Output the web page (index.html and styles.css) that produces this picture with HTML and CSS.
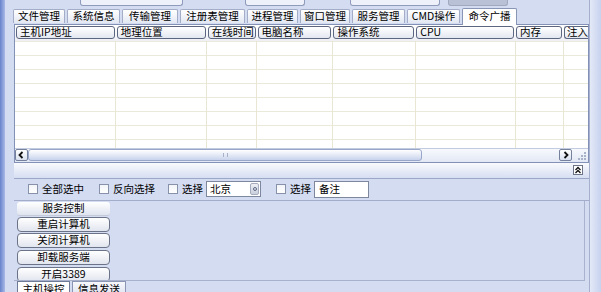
FILE: index.html
```html
<!DOCTYPE html>
<html lang="zh">
<head>
<meta charset="utf-8">
<link rel="stylesheet" href="styles.css">
</head>
<body>
<div class="app">
  <div class="lbar"></div>
  <div class="main">
    <div class="top">
      <span class="tb tb1"></span>
      <span class="tb tb2"></span>
      <span class="tb tb3"></span>
      <span class="tb tb4"></span>
    </div>
    <div class="tabs">
      <span class="tab">文件管理</span>
      <span class="tab">系统信息</span>
      <span class="tab">传输管理</span>
      <span class="tab">注册表管理</span>
      <span class="tab">进程管理</span>
      <span class="tab">窗口管理</span>
      <span class="tab">服务管理</span>
      <span class="tab">CMD操作</span>
      <span class="tab on">命令广播</span>
    </div>
    <div class="grid">
      <div class="head">
        <span class="hc c1">主机IP地址</span>
        <span class="hc c2">地理位置</span>
        <span class="hc c3">在线时间</span>
        <span class="hc c4">电脑名称</span>
        <span class="hc c5">操作系统</span>
        <span class="hc c6">CPU</span>
        <span class="hc c7">内存</span>
        <span class="hc c8">注入</span>
      </div>
      <div class="body">
        <span class="col c1"></span>
        <span class="col c2"></span>
        <span class="col c3"></span>
        <span class="col c4"></span>
        <span class="col c5"></span>
        <span class="col c6"></span>
        <span class="col c7"></span>
        <span class="col c8"></span>
      </div>
      <div class="hs">
        <span class="sbtn"><svg width="11" height="10" viewBox="0 0 11 10"><path d="M6.5 2 L3.5 5 L6.5 8" fill="none" stroke="#111" stroke-width="1.8"/></svg></span>
        <span class="thumb"><span class="gr"></span></span>
        <span class="track"></span>
        <span class="sbtn"><svg width="11" height="10" viewBox="0 0 11 10"><path d="M4.5 2 L7.5 5 L4.5 8" fill="none" stroke="#111" stroke-width="1.8"/></svg></span>
        <span class="grip"><svg width="16" height="13" viewBox="0 0 16 13"><g fill="#a8b2c8"><rect x="12" y="3" width="2" height="2"/><rect x="9" y="6" width="2" height="2"/><rect x="12" y="6" width="2" height="2"/><rect x="6" y="9" width="2" height="2"/><rect x="9" y="9" width="2" height="2"/><rect x="12" y="9" width="2" height="2"/></g></svg></span>
      </div>
    </div>
    <div class="split">
      <span class="colbtn"><svg width="8" height="8" viewBox="0 0 8 8"><path d="M1.5 4 L4 1.5 L6.5 4 M1.5 7 L4 4.5 L6.5 7" fill="none" stroke="#111" stroke-width="1.3"/></svg></span>
    </div>
    <div class="filter">
      <label class="chk f1"><span class="box"></span>全部选中</label>
      <label class="chk f2"><span class="box"></span>反向选择</label>
      <label class="chk f3"><span class="box"></span>选择</label>
      <span class="sel">北京<span class="spin"><span class="dot"></span></span></span>
      <label class="chk f4"><span class="box"></span>选择</label>
      <span class="inp">备注</span>
    </div>
    <div class="panel">
      <div class="grp">服务控制</div>
      <div class="btn b1">重启计算机</div>
      <div class="btn b2">关闭计算机</div>
      <div class="btn b3">卸载服务端</div>
      <div class="btn b4">开启3389</div>
    </div>
    <div class="btabs">
      <span class="bt on">主机操控</span>
      <span class="bt">信息发送</span>
    </div>
  </div>
  <div class="rbar"></div>
</div>
</body>
</html>
```

FILE: styles.css
```css
* { box-sizing: border-box; margin: 0; padding: 0; }
html, body { width: 601px; height: 292px; overflow: hidden; }
body {
  font-family: "Noto Sans CJK SC", "Liberation Sans", sans-serif;
  font-size: 10.5px;
  line-height: 1;
  color: #000;
  background: #d3dbf1;
}
.app { display: flex; height: 292px; }
.lbar { width: 5px; background: linear-gradient(to right, #6783cb, #a9b9e7); }
.rbar { width: 12px; border-left: 1px solid #a5b0cf; background: linear-gradient(to right, #e4e9f7, #c7d2ee); }
.main { flex: 1; display: flex; flex-direction: column; padding-left: 9px; background: #d4dcf2; overflow: hidden; }

/* top strip */
.top { height: 8px; display: flex; align-items: flex-start; }
.tb { height: 6px; border: 1px solid #8f9bbb; border-top: none; border-radius: 0 0 3px 3px; background: #eef1f9; }
.tb1 { margin-left: 66px; width: 103px; }
.tb2 { margin-left: 62px; width: 60px; }
.tb3 { margin-left: 45px; width: 90px; }
.tb4 { margin-left: 8px; width: 60px; background: #b9c1d6; border-color: #a0a9c0; }

/* tabs */
.tabs { height: 16px; display: flex; align-items: flex-end; gap: 2px; margin-left: -1px; }
.tab {
  height: 14px; margin-bottom: 1px;
  display: flex; align-items: center; justify-content: center;
  border: 1px solid #a3adc8; border-bottom: none; border-radius: 2px 2px 0 0;
  background: linear-gradient(#ffffff, #e2e7f2);
  white-space: nowrap;
}
.tab:nth-child(1) { width: 52px; }
.tab:nth-child(2) { width: 53px; }
.tab:nth-child(3) { width: 56px; }
.tab:nth-child(4) { width: 65px; }
.tab:nth-child(5) { width: 51px; }
.tab:nth-child(6) { width: 50px; }
.tab:nth-child(7) { width: 53px; }
.tab:nth-child(8) { width: 53px; }
.tab:nth-child(9) { width: 55px; }
.tab.on { height: 17px; margin-bottom: -1px; background: #fff; border-color: #8895b5; padding-bottom: 2px; position: relative; z-index: 1; }

/* grid */
.grid { width: 575px; height: 139px; border: 1px solid #8391b6; background: #fff; display: flex; flex-direction: column; }
.head { height: 16px; display: flex; background: linear-gradient(#ffffff, #eef0f6); }
.hc {
  margin: 1px 1px 2px 1px;
  border: 1px solid #5d6680; border-radius: 3px;
  background: linear-gradient(#ffffff, #e3e7f0);
  padding-left: 3px; display: flex; align-items: center;
  white-space: nowrap;
}
.c1 { width: 101px; } .c2 { width: 91px; } .c3 { width: 50px; } .c4 { width: 76px; }
.c5 { width: 83px; } .c6 { width: 100px; } .c7 { width: 48px; } .c8 { width: 24px; }
.hc.c1 { width: 99px; } .hc.c2 { width: 89px; } .hc.c3 { width: 48px; } .hc.c4 { width: 74px; }
.hc.c5 { width: 81px; } .hc.c6 { width: 98px; } .hc.c7 { width: 46px; } .hc.c8 { width: 24px; margin-right: 0; border-right: none; border-radius: 3px 0 0 3px; padding-left: 2px; }
.body {
  height: 107px; display: flex;
  background: repeating-linear-gradient(to bottom, #ebeada 0, #ebeada 1px, #ffffff 1px, #ffffff 14px);
}
.col { height: 100%; border-right: 1px solid #e9e7d4; }
.col.c8 { border-right: none; }

/* scrollbar */
.hs { height: 14px; display: flex; align-items: center; background: linear-gradient(#f7f9fd, #e2e8f4); border-top: 1px solid #c3cbe0; }
.sbtn {
  width: 13px; height: 12px; display: flex; align-items: center; justify-content: center;
  border: 1px solid #76819d; border-radius: 2px; background: linear-gradient(#ffffff, #d9e0ef);
}
.thumb {
  width: 394px; height: 12px; border: 1px solid #98a6c9; border-radius: 3px;
  background: linear-gradient(#ffffff, #c8d3ec);
  display: flex; align-items: center; justify-content: center;
}
.gr { width: 5px; height: 4px; border-left: 1px solid #a7b2ca; border-right: 1px solid #a7b2ca; }
.track { flex: 1; height: 12px; }
.grip { width: 16px; height: 13px; }

/* splitter */
.split {
  width: 575px; height: 16px; display: flex; align-items: center; justify-content: flex-end;
  padding-right: 6px; background: linear-gradient(#f9fafd, #d6def2); border-bottom: 1px solid #9ca8c8;
}
.colbtn { width: 10px; height: 10px; border: 1px solid #6c7488; background: #fff; display: flex; align-items: center; justify-content: center; }

/* filter bar */
.filter { width: 575px; height: 22px; display: flex; align-items: center; border-bottom: 1px solid #a3adca; padding-left: 14px; }
.chk { display: flex; align-items: center; white-space: nowrap; }
.box { width: 10px; height: 10px; border: 1px solid #8791aa; background: linear-gradient(#f2f4f8, #ffffff); margin-right: 4px; }
.f2 { margin-left: 15px; }
.f3 { margin-left: 13px; }
.f4 { margin-left: 15px; }
.sel {
  margin-left: 3px; width: 55px; height: 16px; border: 1px solid #7d889f; background: #fff;
  display: flex; align-items: center; padding-left: 3px;
}
.spin {
  margin-left: auto; margin-right: 1px; width: 9px; height: 12px; border-radius: 2px;
  background: linear-gradient(#eef0f5, #c9cfdc); border: 1px solid #a5acbd;
  display: flex; align-items: center; justify-content: center;
}
.dot { width: 4px; height: 4px; border-radius: 50%; border: 1px solid #5f6a86; }
.inp { margin-left: 3px; width: 55px; height: 17px; border: 1px solid #7d889f; background: #fff; display: flex; align-items: center; padding-left: 4px; }

/* panel with buttons */
.panel { width: 571px; height: 81px; border-right: 1px solid #aab3cd; border-bottom: 1px solid #a7b1cc; padding-left: 3px; overflow: hidden; }
.grp {
  width: 93px; height: 14px; margin-top: 1px; display: flex; align-items: center; justify-content: center;
  background: linear-gradient(#ffffff, #dfe4ef); border-radius: 3px; border-bottom: 1px solid #c4cad9;
}
.btn {
  width: 93px; height: 15px; display: flex; align-items: center; justify-content: center;
  border: 1px solid #6a7388; border-radius: 4px; background: linear-gradient(#ffffff, #e1e5ee);
}
.b1 { margin-top: 1px; } .b2 { margin-top: 1px; } .b3 { margin-top: 2px; } .b4 { margin-top: 2px; }

/* bottom tabs */
.btabs { height: 11px; display: flex; gap: 2px; padding-left: 3px; }
.bt {
  width: 54px; height: 13px; display: flex; justify-content: center; padding-top: 2px;
  border: 1px solid #8a96b3; border-bottom: none; background: linear-gradient(#f7f8fc, #e0e5f1);
}
.bt.on { width: 53px; background: #fff; border-color: #6f7a96; }
```
